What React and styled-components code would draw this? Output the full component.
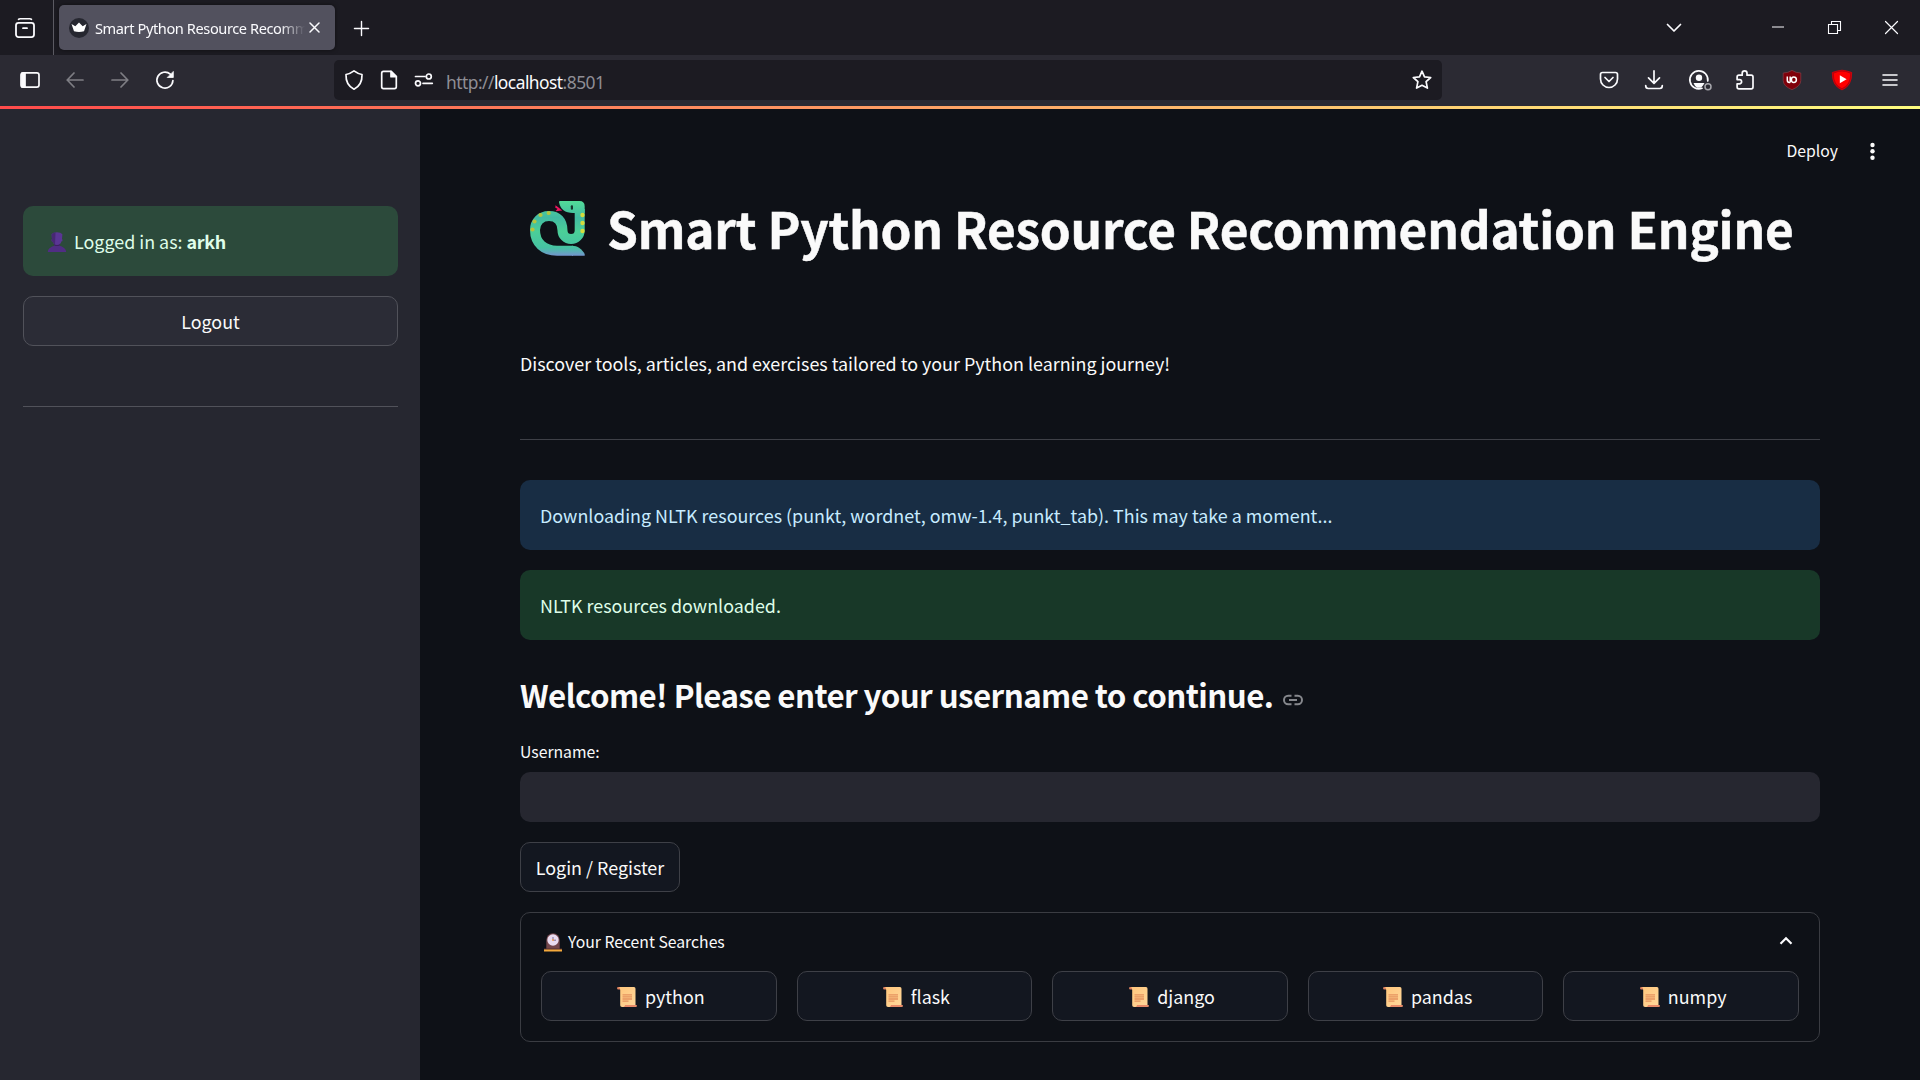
import React from "react";
import styled, { createGlobalStyle } from "styled-components";

const Global = createGlobalStyle`
  * { box-sizing: border-box; }
  html, body { margin: 0; background: #0e1117; }
  body { width: 1920px; height: 1080px; overflow: hidden; }
  button, input { font: inherit; color: inherit; margin: 0; }
`;

const Browser = styled.div`
  width: 1920px;
  height: 1080px;
  display: flex;
  flex-direction: column;
  color: #fbfbfe;
  font-family: "Noto Sans", "Open Sans", sans-serif;
`;

const TabBar = styled.div`
  height: 55px;
  flex: none;
  display: flex;
  align-items: center;
  background: #1c1b22;
`;

const Slot = styled.div`
  width: ${(p) => p.$w}px;
  height: 100%;
  flex: none;
  display: flex;
  align-items: center;
  justify-content: center;
  opacity: ${(p) => (p.$dim ? 0.4 : 1)};
  svg { display: block; overflow: visible; }
`;

const TabDivider = styled.div`
  width: 1px;
  height: 55px;
  background: #5b5a62;
  margin-right: 5px;
`;

const Tab = styled.div`
  width: 276px;
  height: 45px;
  padding: 0 15px 0 10px;
  display: flex;
  align-items: center;
  background: #52515e;
  border-radius: 5px;
  box-shadow: 0 0 4px rgba(0, 0, 0, 0.5);
  svg { display: block; flex: none; }
`;

const TabTitle = styled.div`
  width: 210px;
  margin: 0 4px 0 6px;
  overflow: hidden;
  white-space: nowrap;
  font-size: 14.6px;
  letter-spacing: -0.41px;
  line-height: 24px;
  mask-image: linear-gradient(90deg, #000 88%, transparent 100%);
`;

const Fill = styled.div`
  flex: 1;
`;

const NavBar = styled.div`
  height: 51px;
  flex: none;
  display: flex;
  align-items: center;
  background: #2b2a33;
  padding: 0 7px 1px;
`;

const UrlBar = styled.div`
  width: 1108px;
  height: 40px;
  display: flex;
  align-items: center;
  background: #1c1b22;
  border-radius: 5px;
  padding-left: 2px;
`;

const Url = styled.div`
  font-size: 17.4px;
  line-height: 24px;
  letter-spacing: -0.53px;
  color: #8f8e95;
  padding: 3px 0 0 4px;
  b { font-weight: 400; color: #fbfbfe; }
`;

const Decoration = styled.div`
  height: 3px;
  flex: none;
  background: linear-gradient(90deg, #ff4b4b, #fffd80);
`;

const Page = styled.div`
  flex: 1;
  min-height: 0;
  display: flex;
  color: #fafafa;
  font-family: "Noto Sans CJK JP", "Noto Sans CJK SC", sans-serif;
  font-size: 17.9px;
`;

const Sidebar = styled.aside`
  width: 420px;
  flex: none;
  background: #262730;
  padding: 97px 22px 0 23px;
`;

const Main = styled.main`
  flex: 1;
  background: #0e1117;
`;

const AppHeader = styled.header`
  height: 84px;
  display: flex;
  justify-content: flex-end;
  align-items: center;
  gap: 24px;
  padding: 0 38px 0 0;
  font-size: 15.75px;
`;

const Deploy = styled.span`
  padding-bottom: 2px;
`;

const Block = styled.div`
  width: 1300px;
  margin-left: 100px;
`;

const TONES = {
  info: ["#182d44", "#c7ebff"],
  success: ["#183828", "#dffde9"],
  user: ["#2c4a3b", "#dffde9"],
};

const Alert = styled.div`
  height: 70px;
  padding: 0 20px 0 ${(p) => (p.$tone === "user" ? 24 : 20)}px;
  display: flex;
  align-items: center;
  gap: 7px;
  white-space: pre;
  border-radius: 10px;
  background: ${(p) => TONES[p.$tone][0]};
  color: ${(p) => TONES[p.$tone][1]};
  margin-bottom: 20px;
  b { font-weight: 600; letter-spacing: -0.3px; }
  svg { margin-top: 1px; }
`;

const Button = styled.button`
  height: 50px;
  width: ${(p) => (p.$w ? p.$w + "px" : "100%")};
  padding: 0 0 0 ${(p) => (p.$icon ? 4 : 0)}px;
  display: flex;
  align-items: center;
  justify-content: center;
  gap: 8px;
  border: 1px solid ${(p) => (p.$side ? "#51525a" : "#3e4047")};
  border-radius: 10px;
  background: ${(p) => (p.$side ? "#2b2c36" : "#131720")};
  svg { margin-top: 2px; }
`;

const Rule = styled.hr`
  border: 0;
  height: 1px;
  margin: ${(p) => p.$m};
  background: ${(p) => p.$c};
`;

const Title = styled.h1`
  height: 80px;
  margin: -5px 0 0;
  display: flex;
  align-items: center;
  padding-left: 10px;
  gap: 22px;
  font-size: 49.5px;
  letter-spacing: -0.19px;
  line-height: 80px;
  font-weight: 700;
  white-space: nowrap;
  -webkit-text-stroke: 0.5px #fafafa;
  span { padding-bottom: 1px; }
`;

const Lead = styled.p`
  margin: 80px 0 0;
  height: 30px;
  line-height: 30px;
`;

const Subtitle = styled.h2`
  margin: 28px 0 0;
  height: 54px;
  display: flex;
  align-items: center;
  gap: 10px;
  font-size: 31.3px;
  letter-spacing: -0.58px;
  font-weight: 600;
  line-height: 54px;
  white-space: nowrap;
`;

const Label = styled.label`
  display: block;
  margin-top: 18px;
  height: 24px;
  line-height: 24px;
  font-size: 15.75px;
`;

const Input = styled.input`
  display: block;
  width: 100%;
  height: 50px;
  margin: 8px 0 20px;
  border: 0;
  border-radius: 10px;
  background: #262730;
`;

const Expander = styled.section`
  height: 130px;
  margin-top: 20px;
  padding: 0 20px;
  border: 1px solid #3a3c42;
  border-radius: 10px;
`;

const Summary = styled.div`
  height: 58px;
  display: flex;
  align-items: center;
  gap: 6px;
  padding: 0 3px 2px 3px;
  font-size: 15.75px;
  svg { margin-top: 2px; }
`;

const Searches = styled.div`
  display: grid;
  grid-template-columns: repeat(5, 1fr);
  gap: 20px;
`;

const Line = ({ s = 20, vb = 20, w = 1.7, children, ...rest }) => (
  <svg width={s} height={s} viewBox={`0 0 ${vb} ${vb}`} fill="none" stroke="#fbfbfe" strokeWidth={w} strokeLinecap="round" strokeLinejoin="round" {...rest}>
    {children}
  </svg>
);

const Anchor = styled(Line)`
  margin-top: 10px;
`;

const Snake = () => (
  <svg width="55" height="55" viewBox="0 0 55 55" fill="none">
    <defs>
      <linearGradient id="body" x1="0" y1="0" x2="0" y2="55" gradientUnits="userSpaceOnUse">
        <stop offset="0" stopColor="#52dc98" />
        <stop offset=".3" stopColor="#42baa2" />
        <stop offset=".55" stopColor="#4bcf98" />
        <stop offset=".85" stopColor="#46c2a2" />
        <stop offset="1" stopColor="#7593d0" />
      </linearGradient>
    </defs>
    <path d="M49.7 8V29.5a8.6 8.6 0 0 1-17.2 0C32.5 20 27.5 15 19 15S5 21 5 29C5 42 14 49.7 27 49.7H43" stroke="url(#body)" strokeWidth="10" />
    <path d="M29 1q0-1 1-1H49.5q5.2 0 5.2 5.5V12H43Q31 12 29 1Z" fill="url(#body)" />
    <path d="M25.5 4.200l3 2.200 3.700 3-6.700.8 2-2.400-2.200-1z" fill="#f0145f" />
    <path d="M42 44.7c5.5 0 10 3.3 12.7 8.3v1.700H42z" fill="url(#body)" />
    <rect x="40.8" y="4.2" width="2.2" height="4.6" rx="1" fill="#17362f" />
    <g fill="#d5dc3b">
      <circle cx="52.5" cy="14" r="2.2" />
      <circle cx="52.5" cy="22" r="2.2" />
      <circle cx="52.5" cy="30" r="2.2" />
    </g>
    <g fill="#b5c43e">
      <circle cx="18.7" cy="12" r="2.1" />
      <circle cx="10.5" cy="14" r="2.1" />
      <circle cx="4.5" cy="20.5" r="2.1" />
      <circle cx="2.5" cy="28.5" r="2.1" />
    </g>
  </svg>
);

const Person = () => (
  <svg width="20" height="20" viewBox="0 0 20 20">
    <path d="M7.2 11h5.600v4H7.200z" fill="#3c2161" />
    <path d="M.800 20C1 15.500 6 14.500 7.500 13.500q2.500 1 5 0C14 14.500 19 15.500 19.200 20z" fill="#502d84" />
    <path d="M4.600 2.300Q6 .2 10 .2t5.400 2.100L15 7q.8.300.4 2.200h-.9Q13.500 13 10 13T5.500 9.200h-.9Q4.200 7.300 5 7z" fill="#5a3594" />
    <path d="M4.600 2.300Q6 .6 8.500.3L8 12.600Q6 11.500 5.500 9.200h-.9Q4.200 7.300 5 7z" fill="#472873" />
  </svg>
);

const Clock = () => (
  <svg width="18" height="19" viewBox="0 0 18 19">
    <path d="M2.300 17V7a6.700 6.700 0 0 1 13.400 0v10z" fill="#73464b" />
    <path d="M0 15.500h18V17H0z" fill="#54302f" />
    <rect y="16.500" width="18" height="2" fill="#f5aa3c" />
    <circle cx="9" cy="7" r="5.700" fill="#eadcf0" />
    <path d="M9 4v3.200h3" stroke="#7f6d9b" strokeWidth="1" fill="none" />
    <circle cx="9" cy="7" r="1" fill="#f0a050" />
  </svg>
);

const Scroll = () => (
  <svg width="20" height="20" viewBox="0 0 20 20">
    <defs>
      <linearGradient id="paper" x1="0" y1="0" x2="1" y2="1">
        <stop offset="0" stopColor="#ffc67c" />
        <stop offset="1" stopColor="#ffd79a" />
      </linearGradient>
    </defs>
    <path d="M0 1Q0 0 1.500 0H4v2.600H1.500Q0 2.600 0 1z" fill="#e08360" />
    <path d="M2 0H17q1.500.2 1.500 1.800V19q0 1-1 1H5q-1.800 0-1.800-1.800V3Q3.200.5 2 0z" fill="url(#paper)" />
    <path d="M8 18h11.200q1 0 .8 1t-1.200 1H6.500Q8 19.500 8 18z" fill="#e88a68" />
    <path d="M5.500 7.800H15M5.500 9.900H15M5.500 12H15M5.500 14.100h6" stroke="#e6935f" strokeWidth="1.300" />
  </svg>
);

const searches = ["python", "flask", "django", "pandas", "numpy"];

export default function App() {
  return (
    <Browser>
      <Global />
      <TabBar>
        <Slot $w={50}>
          <Line w={1.8}>
            <path d="M3.500 1.300q.7-.6 1.700-.6h9.600q1 0 1.700.6" strokeWidth="1.600" />
            <rect x="1" y="4.800" width="18" height="14.300" rx="2.500" />
            <path d="M8 10.200h4" />
          </Line>
        </Slot>
        <Slot $w={3} />
        <TabDivider />
        <Tab>
          <svg width="20" height="20" viewBox="0 0 20 20">
            <circle cx="10" cy="10" r="10" fill="#262730" />
            <path d="M2.500 6l3.800 2.300L10 4.500l3.700 3.800L17.500 6 15 13.200q-5 1.400-10 0z" fill="#fff" />
          </svg>
          <TabTitle>Smart Python Resource Recommendation Engine</TabTitle>
          <Line s={11} vb={11} w={1.5}><path d="M1 1l9 9M10 1l-9 9" /></Line>
        </Tab>
        <Slot $w={53}><Line s={15} vb={16} w={1.5}><path d="M8 1.500v15M.5 9h15" /></Line></Slot>
        <Fill />
        <Slot $w={60}><Line s={16} vb={16} w={1.7}><path d="M1.500 4.500L8 11l6.500-6.500" /></Line></Slot>
        <Slot $w={45} />
        <Slot $w={57}>
          <Line s={12} vb={12} w={1} strokeLinecap="butt"><path d="M0 5h12" /></Line>
        </Slot>
        <Slot $w={57}>
          <Line s={13} vb={13} w={1.1} strokeLinejoin="miter"><path d="M.5 3.500h9v9h-9zM3.500 3V.5h9v9H10" /></Line>
        </Slot>
        <Slot $w={57}><Line s={13} vb={13} w={1.2}><path d="M.5.5l12 12M12.500.5l-12 12" /></Line></Slot>
      </TabBar>
      <NavBar>
        <Slot $w={46}>
          <Line>
            <rect x="1" y="2.800" width="18" height="14.400" rx="2.200" />
            <path d="M2 3h3v14H2z" fill="#fbfbfe" />
          </Line>
        </Slot>
        <Slot $w={44} $dim><Line s={18} vb={18} w={1.7}><path d="M17 9H1.200M8 2L1.200 9 8 16" /></Line></Slot>
        <Slot $w={46} $dim><Line s={18} vb={18} w={1.7}><path d="M1 9h15.800M10 2l6.800 7L10 16" /></Line></Slot>
        <Slot $w={44}>
          <Line s={18} vb={18} w={1.7}>
            <path d="M16.900 9.500A8 8 0 1 1 14.300 3.200" />
            <path d="M17.300.8V6.500H11.600z" fill="#fbfbfe" strokeWidth=".8" />
          </Line>
        </Slot>
        <Slot $w={147} />
        <UrlBar>
          <Slot $w={35}><Line><path d="M10 .9q4 3 8 3.600Q18.400 15 10 19.200 1.600 15 2 4.500 6 3.900 10 .9z" /></Line></Slot>
          <Slot $w={35}>
            <Line>
              <path d="M12 1.400H4.500Q2.700 1.400 2.700 3.200V16.800q0 1.800 1.800 1.800h11q1.800 0 1.800-1.800V6.700z" />
              <path d="M12 1.400V6.700h5.300z" fill="#fbfbfe" />
            </Line>
          </Slot>
          <Slot $w={36}>
            <Line>
              <path d="M1.500 6.500H11M9 13.300h9.300" />
              <circle cx="14.800" cy="6.500" r="2.500" />
              <circle cx="4" cy="13.300" r="2.500" />
            </Line>
          </Slot>
          <Url>http://<b>localhost</b>:8501</Url>
          <Fill />
          <Slot $w={40}>
            <Line><path d="M10 1.200l2.500 5.600 6.200.7-4.600 4.200 1.300 6.400L10 15.300l-5.400 2.800 1.300-6.400L1.300 7.500l6.200-.7z" /></Line>
          </Slot>
        </UrlBar>
        <Fill />
        <Slot $w={45}>
          <Line><path d="M3.500 2.500h13q2 0 2 2V9a8.500 8.500 0 0 1-17 0V4.500q0-2 2-2zM6 7.500l4 4 4-4" /></Line>
        </Slot>
        <Slot $w={45}><Line><path d="M10 .9v12M4.500 7.800L10 13.300l5.500-5.500M1.700 15.500q0 3 2.500 3h11.600q2.500 0 2.500-3" /></Line></Slot>
        <Slot $w={46}>
          <Line>
            <path d="M13 18.300A9 9 0 1 1 18.800 11" />
            <circle cx="10" cy="7.700" r="3.200" fill="#fbfbfe" stroke="none" />
            <path d="M4.500 13h11l-1.500 2.500-2 2.200H8q-2.500-1.700-3.500-4.700z" fill="#fbfbfe" stroke="none" />
            <circle cx="19" cy="16.700" r="3" stroke="#a7a7ad" strokeWidth="1.500" />
          </Line>
        </Slot>
        <Slot $w={45}>
          <Line><path d="M4 5.200H7.200V3.300a2.400 2.400 0 0 1 4.800 0V5.200h4.200q1.800 0 1.800 1.800v10q0 1.900-1.800 1.900H4q-1.900 0-1.900-1.900V13.800H4.500a2 2 0 0 0 0-4.200H2.100V7Q2.100 5.200 4 5.200z" /></Line>
        </Slot>
        <Slot $w={49}>
          <svg width="20" height="20" viewBox="0 0 20 20">
            <path d="M10 .4q4 2.600 8.800 2.600v7.500q0 5.500-8.800 9.200-8.800-3.700-8.800-9.200V3Q6 3 10 .4z" fill="#80000a" stroke="#7d3a42" strokeWidth=".8" />
            <path d="M5.300 6.500v3.800q0 2.100 2 2.100h.9M8.200 6.500v5.900M11.700 12.400q-2.300 0-2.300-2.700T11.700 7q2.700 0 2.700 2.700t-2.700 2.700z" stroke="#fff" strokeWidth="1.500" fill="none" />
          </svg>
        </Slot>
        <Slot $w={51}>
          <svg width="20" height="20" viewBox="0 0 20 20">
            <path d="M10 .2q4.500.4 9.700 2.300Q20 16 10 19.900 0 16 .3 2.500 5.500.6 10 .2z" fill="#b8000a" stroke="#e00008" strokeWidth=".8" />
            <path d="M10 1.600q4 .3 8.200 1.800Q18.300 14.500 10 18.300 1.700 14.500 1.800 3.400 6 1.900 10 1.600z" fill="#ff0000" />
            <path d="M7.800 5.300L14.600 9.200 7.800 13.200z" fill="#fff" />
          </svg>
        </Slot>
        <Slot $w={46}><Line s={16} vb={16} w={1.6}><path d="M1 3h14M1 8h14M1 13h14" /></Line></Slot>
      </NavBar>
      <Decoration />
      <Page>
        <Sidebar>
          <Alert $tone="user">
            <Person />
            <span>Logged in as: <b>arkh</b></span>
          </Alert>
          <Button $side>Logout</Button>
          <Rule $m="60px 0 0" $c="#51525a" />
        </Sidebar>
        <Main>
          <AppHeader>
            <Deploy>Deploy</Deploy>
            <Slot $w={20}>
              <svg width="6" height="18" viewBox="0 0 6 18" fill="#fafafa">
                <circle cx="3.500" cy="3" r="2.200" />
                <circle cx="3.500" cy="9.300" r="2.200" />
                <circle cx="3.500" cy="15.700" r="2.200" />
              </svg>
            </Slot>
          </AppHeader>
          <Block>
            <Title><Snake /><span>Smart Python Resource Recommendation Engine</span></Title>
            <Lead>Discover tools, articles, and exercises tailored to your Python learning journey!</Lead>
            <Rule $m="61px 0 40px" $c="#3e4047" />
            <Alert $tone="info">Downloading NLTK resources (punkt, wordnet, omw-1.4, punkt_tab). This may take a moment...</Alert>
            <Alert $tone="success">NLTK resources downloaded.</Alert>
            <Subtitle>
              <span>Welcome! Please enter your username to continue.</span>
              <Anchor stroke="#86888d" w={2} strokeLinecap="butt">
                <path d="M8.500 5.800H5.200a4.200 4.200 0 0 0 0 8.400H8.500M11.500 5.800h3.300a4.200 4.200 0 0 1 0 8.400H11.500M6 10h8" />
              </Anchor>
            </Subtitle>
            <Label htmlFor="username">Username:</Label>
            <Input id="username" />
            <Button $w={160}>Login / Register</Button>
            <Expander>
              <Summary>
                <Clock />
                <span>Your Recent Searches</span>
                <Fill />
                <Line s={20} vb={20} w={2.2} strokeLinecap="butt" strokeLinejoin="miter"><path d="M4.500 11.700L10 6.200l5.500 5.500" /></Line>
              </Summary>
              <Searches>
                {searches.map((s) => (
                  <Button key={s} $icon><Scroll /><span>{s}</span></Button>
                ))}
              </Searches>
            </Expander>
          </Block>
        </Main>
      </Page>
    </Browser>
  );
}
